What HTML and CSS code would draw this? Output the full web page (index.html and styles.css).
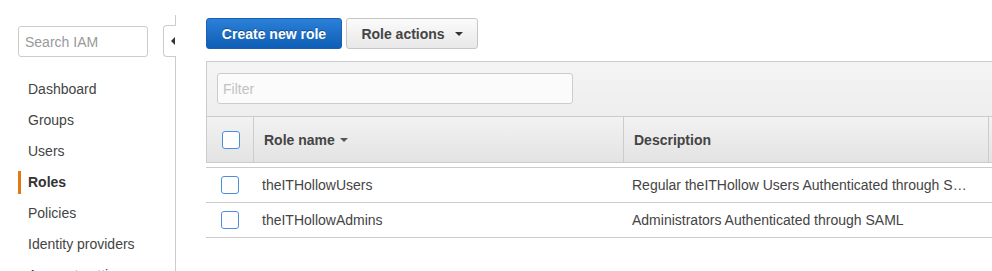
FILE: index.html
```html
<!DOCTYPE html>
<html lang="en">
<head>
    <meta charset="UTF-8">
    <title>IAM Roles</title>
    <link rel="stylesheet" href="styles.css">
</head>
<body>
    <div class="page">
        <aside class="sidebar">
            <input type="text" class="search" placeholder="Search IAM">
            <span class="collapse-tab"><span class="tri-left"></span></span>
            <nav class="nav">
                <a href="#">Dashboard</a>
                <a href="#">Groups</a>
                <a href="#">Users</a>
                <a href="#" class="active">Roles</a>
                <a href="#">Policies</a>
                <a href="#">Identity providers</a>
                <a href="#">Account settings</a>
            </nav>
        </aside>

        <main class="main">
            <div class="toolbar">
                <button class="btn btn-primary">Create new role</button>
                <button class="btn btn-default">Role actions <span class="caret"></span></button>
            </div>

            <div class="panel">
                <div class="filter-bar">
                    <input type="text" class="filter" placeholder="Filter">
                </div>
                <div class="grid head">
                    <div class="cell check"><span class="checkbox"></span></div>
                    <div class="cell">Role name <span class="caret small"></span></div>
                    <div class="cell">Description</div>
                    <div class="cell"></div>
                </div>
                <div class="rows">
                    <div class="grid row">
                        <div class="cell check"><span class="checkbox"></span></div>
                        <div class="cell">theITHollowUsers</div>
                        <div class="cell">Regular theITHollow Users Authenticated through SAML</div>
                        <div class="cell"></div>
                    </div>
                    <div class="grid row">
                        <div class="cell check"><span class="checkbox"></span></div>
                        <div class="cell">theITHollowAdmins</div>
                        <div class="cell">Administrators Authenticated through SAML</div>
                        <div class="cell"></div>
                    </div>
                </div>
            </div>
        </main>
    </div>
</body>
</html>
```

FILE: styles.css
```css
html {
    overflow: hidden;
}
body {
    margin: 0;
    font-family: "Liberation Sans", Arial, sans-serif;
    font-size: 14px;
    color: #444;
    background-color: #fff;
    height: 271px;
    overflow: hidden;
}
.page {
    display: flex;
    align-items: flex-start;
    height: 271px;
    overflow: hidden;
}
.sidebar {
    position: relative;
    flex: 0 0 175px;
    margin-top: 15px;
    height: 300px;
    border-right: 1px solid #ccc;
}
.search {
    display: block;
    box-sizing: border-box;
    width: 130px;
    height: 31px;
    margin: 11px 0 0 18px;
    padding: 0 6px;
    border: 1px solid #ccc;
    border-radius: 3px;
    font-family: inherit;
    font-size: 14px;
    outline: none;
}
.search::placeholder {
    color: #999;
}
.collapse-tab {
    position: absolute;
    top: 10px;
    right: -1px;
    width: 12px;
    height: 30px;
    background-color: #fff;
    border: 1px solid #ccc;
    border-right: none;
    border-radius: 4px 0 0 4px;
    display: flex;
    align-items: center;
    justify-content: flex-end;
}
.tri-left {
    width: 0;
    height: 0;
    margin-right: 1px;
    border-top: 4px solid transparent;
    border-bottom: 4px solid transparent;
    border-right: 4px solid #333;
}
.nav {
    display: flex;
    flex-direction: column;
    gap: 8px;
    margin-top: 21px;
}
.nav a {
    display: block;
    margin-left: 18px;
    padding-left: 7px;
    border-left: 3px solid transparent;
    line-height: 23px;
    color: #444;
    text-decoration: none;
    white-space: nowrap;
}
.nav a.active {
    border-left-color: #e47911;
    font-weight: bold;
    color: #333;
}
.main {
    flex: 1;
    min-width: 0;
    padding: 18px 0 0 30px;
}
.toolbar {
    display: flex;
    gap: 4px;
}
.btn {
    box-sizing: border-box;
    height: 31px;
    border-radius: 3px;
    font-family: inherit;
    font-size: 14px;
    font-weight: bold;
    cursor: pointer;
}
.btn-primary {
    width: 136px;
    color: #fff;
    border: 1px solid #1a5fb4;
    background: linear-gradient(#2b80d8, #0f5eb5);
    text-shadow: 0 -1px 0 rgba(0, 0, 0, 0.35);
}
.btn-default {
    width: 132px;
    color: #444;
    border: 1px solid #c6c6c6;
    background: linear-gradient(#fbfbfb, #e8e8e8);
    display: flex;
    align-items: center;
    justify-content: center;
    gap: 10px;
}
.caret {
    display: inline-block;
    width: 0;
    height: 0;
    border-left: 4px solid transparent;
    border-right: 4px solid transparent;
    border-top: 4px solid #333;
}
.caret.small {
    margin-left: 5px;
    vertical-align: middle;
    border-top: 4px solid #555;
}
.panel {
    margin-top: 12px;
    width: 1000px;
}
.filter-bar {
    border-top: 1px solid #ccc;
    border-left: 1px solid #ccc;
    padding: 11px 10px 12px;
    background: linear-gradient(#f4f4f4, #eeeeee);
}
.filter {
    display: block;
    box-sizing: border-box;
    width: 356px;
    height: 31px;
    padding: 0 5px;
    border: 1px solid #ccc;
    border-radius: 3px;
    background-color: #fbfbfb;
    font-family: inherit;
    font-size: 14px;
    outline: none;
}
.filter::placeholder {
    color: #c2c2c2;
}
.grid {
    display: grid;
    grid-template-columns: 47px 370px 365px 218px;
}
.head {
    height: 47px;
    border-top: 1px solid #ccc;
    border-left: 1px solid #ccc;
    border-bottom: 1px solid #ccc;
    box-sizing: border-box;
    background: linear-gradient(#f2f2f2, #e3e3e3);
    font-weight: bold;
}
.head .cell {
    border-right: 1px solid #ccc;
    padding-left: 10px;
}
.head .cell.check {
    padding-left: 0;
}
.cell {
    display: flex;
    align-items: center;
    min-width: 0;
    white-space: nowrap;
    overflow: hidden;
    text-overflow: ellipsis;
    box-sizing: border-box;
}
.row .cell {
    display: block;
    line-height: 35px;
    padding: 0 18px 0 9px;
}
.row .cell.check {
    display: flex;
    padding: 0;
}
.cell.check {
    justify-content: center;
}
.rows {
    margin-top: 4px;
    border-top: 1px solid #ccc;
}
.row {
    height: 35px;
    box-sizing: border-box;
    border-bottom: 1px solid #ccc;
}
.checkbox {
    display: block;
    width: 18px;
    height: 18px;
    box-sizing: border-box;
    border: 1px solid #4a8fdd;
    border-radius: 3px;
    background-color: #fff;
}
.head .checkbox {
    margin-left: 2px;
}
```
